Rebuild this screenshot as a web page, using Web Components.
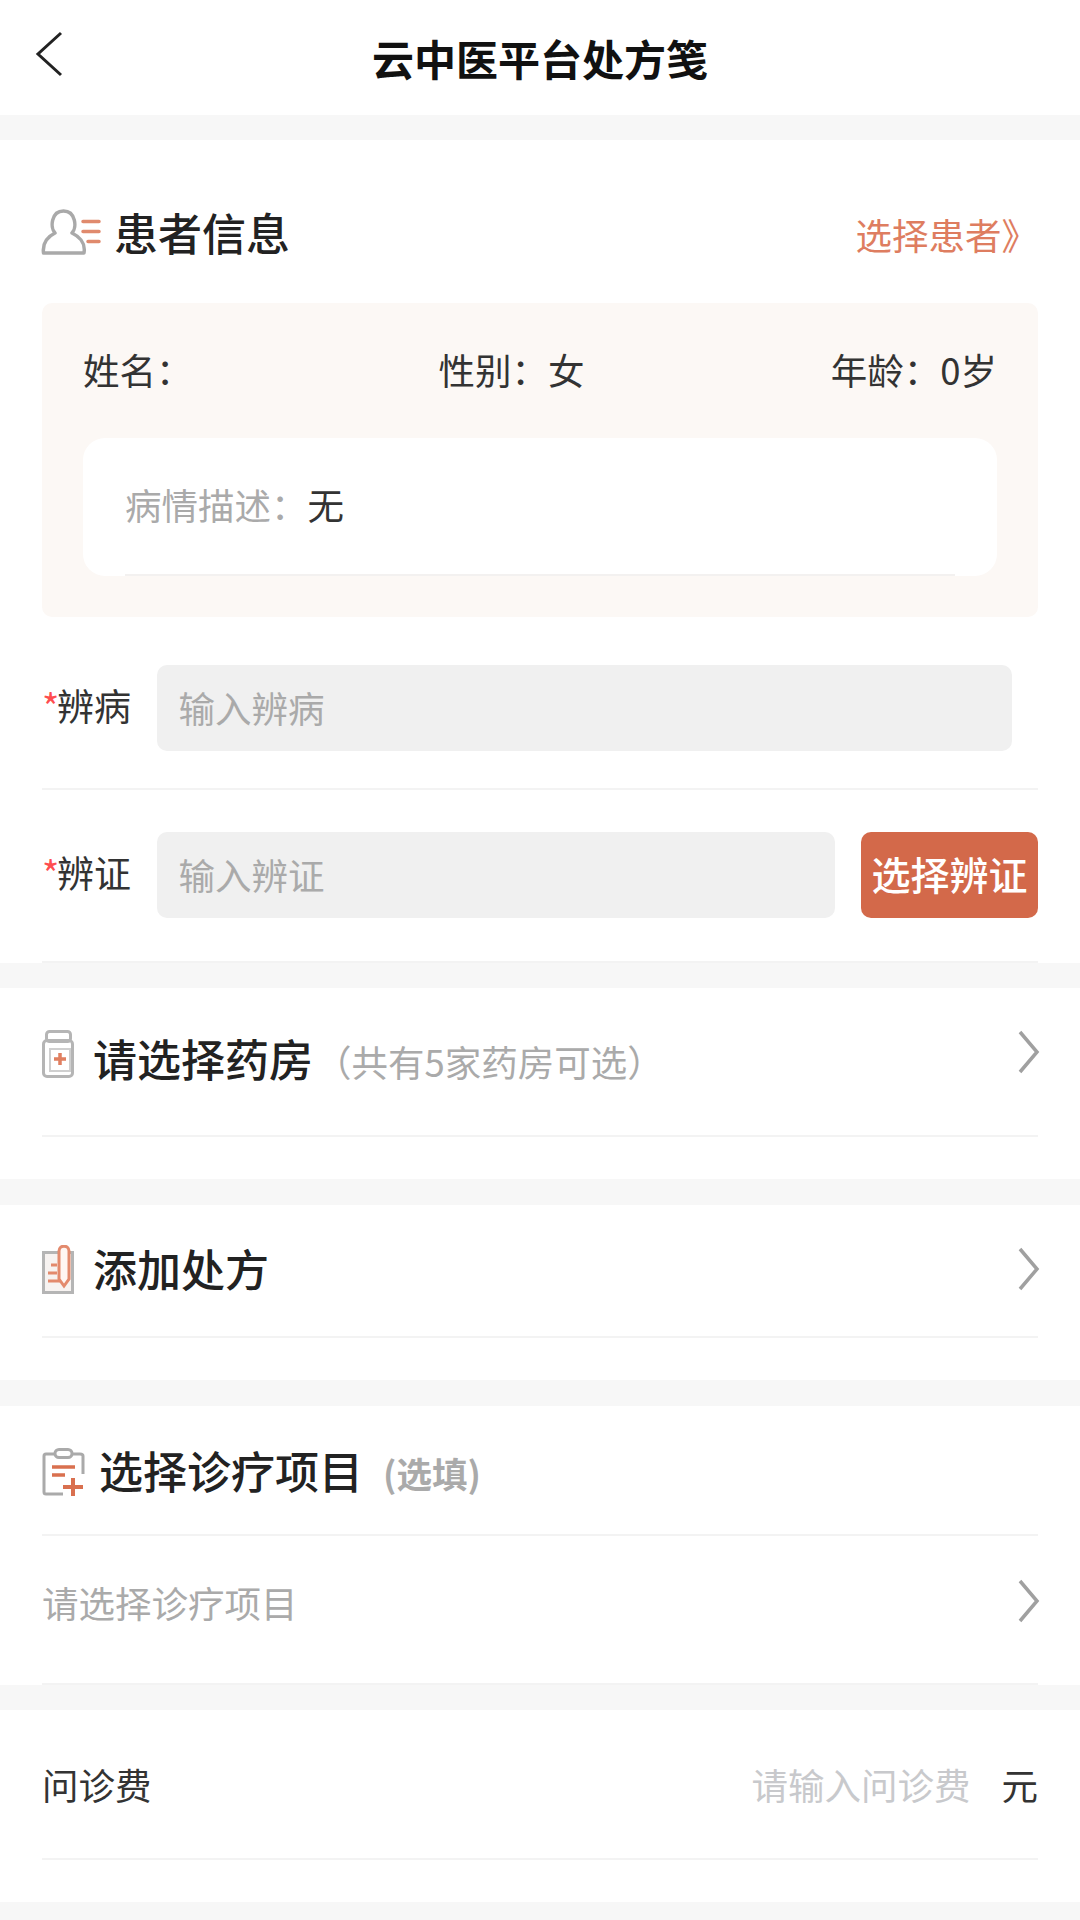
<!DOCTYPE html>
<html lang="zh">
<head>
<meta charset="utf-8">
<title>云中医平台处方笺</title>
<style>
html, body { margin: 0; background: #f7f7f7; }
body { width: 1080px; height: 1920px; overflow: hidden; font-family: "Noto Sans CJK SC", "Noto Sans", sans-serif; color: #333; }
</style>
</head>
<body>
<rx-header>云中医平台处方笺</rx-header>

<rx-section style="margin-top:25px">
  <rx-patient></rx-patient>
  <rx-field label="辨病" placeholder="输入辨病" style="padding:48px 26px 37px 0"></rx-field>
  <rx-field label="辨证" placeholder="输入辨证" action="选择辨证" style="padding:42px 0 43px"></rx-field>
</rx-section>

<rx-section style="margin-top:25px;height:191px">
  <rx-nav-row icon="bottle" note="（共有5家药房可选）" style="height:149px;--title-lift:7px;--icon-lift:15px;--go-lift:20px">请选择药房</rx-nav-row>
</rx-section>

<rx-section style="margin-top:26px;height:175px">
  <rx-nav-row icon="pen" style="height:133px;--title-lift:5px;--icon-lift:1px;--go-lift:3px">添加处方</rx-nav-row>
</rx-section>

<rx-section style="margin-top:26px">
  <rx-title-row icon="clip" note="(选填)">选择诊疗项目</rx-title-row>
  <rx-pick-row>请选择诊疗项目</rx-pick-row>
</rx-section>

<rx-section style="margin-top:25px;height:192px">
  <rx-fee-row placeholder="请输入问诊费" unit="元">问诊费</rx-fee-row>
</rx-section>

<script>
/** Icons, drawn at 1:1 on the page's pixel scale */
const RxIcons = {
    back: `<svg width="28" height="46" viewBox="0 0 28 46" fill="none" stroke="#222" stroke-width="3"><path d="M26 2 L3 23 L26 44"/></svg>`,
    chevron: `<svg width="23" height="46" viewBox="0 0 23 46" fill="none" stroke="#a0a0a0" stroke-width="3.500"><path d="M3 3 L20 23 L3 43"/></svg>`,
    person: `<svg width="60" height="48" viewBox="0 0 60 48" fill="none" stroke-linecap="round">
        <path d="M2.500 45 C1 33 8 28 14 25 C9 20 10 3 22.500 3 C35 3 36 20 31 25 C37 28 45 33 43 45 Z" stroke="#a9a9a9" stroke-width="3.500" stroke-linejoin="round"/>
        <path d="M42 13.500 H58 M42 23.500 H58 M47 33.500 H58" stroke="#e08a6d" stroke-width="3.500"/></svg>`,
    bottle: `<svg width="32" height="48" viewBox="0 0 32 48" fill="none">
        <rect x="4.500" y="1.500" width="24" height="10" rx="3" stroke="#b5b5b5" stroke-width="3"/>
        <rect x="1.500" y="10.500" width="29" height="36" rx="3.500" stroke="#b5b5b5" stroke-width="3"/>
        <rect x="8" y="19" width="20" height="22" stroke="#cfcfcf" stroke-width="2"/>
        <path d="M18 23 V35 M12 29 H24" stroke="#e07f60" stroke-width="3.500"/></svg>`,
    pen: `<svg width="32" height="50" viewBox="0 0 32 50" fill="none">
        <path d="M1.500 7.500 H30.500 V47.500 H1.500 Z" fill="#f7f3f1" stroke="#b5b5b5" stroke-width="3"/>
        <path d="M17 6 C17 -0.500 27 -0.500 27 6 V34 L22 41 L17 34 Z" fill="#fff6f2" stroke="#e38a6d" stroke-width="3"/>
        <path d="M9 20 H15 M6 28 H15 M6 36 H19" stroke="#e38a6d" stroke-width="3"/></svg>`,
    clip: `<svg width="46" height="50" viewBox="0 0 46 50" fill="none">
        <path d="M12 7 H4 Q2 7 2 9 V45 Q2 47 4 47 H21 M29 7 H38 Q41 7 41 9 V27" stroke="#aaa" stroke-width="3"/>
        <rect x="13" y="2.500" width="17" height="8" rx="4" stroke="#aaa" stroke-width="3"/>
        <path d="M10 20 H33 M10 28 H23" stroke="#d9704f" stroke-width="3.500"/>
        <path d="M31 31 V49 M21 40 H41" stroke="#d9704f" stroke-width="4"/></svg>`
};

customElements.define('rx-header', class extends HTMLElement {
    connectedCallback(){
        this.attachShadow({mode: 'open'}).innerHTML = `<style>
        :host { display: flex; align-items: center; justify-content: center; position: relative; height: 115px; background: #fff; }
        .back { position: absolute; left: 35px; top: 31px; line-height: 0; }
        h1 { margin: 0 0 0; font-size: 42px; font-weight: 700; color: #111; line-height: 115px; }
        </style>
        <span class="back">${RxIcons.back}</span><h1><slot></slot></h1>`;
    }
});

/** White band with the page's side padding */
customElements.define('rx-section', class extends HTMLElement {
    connectedCallback(){
        this.attachShadow({mode: 'open'}).innerHTML = `<style>
        :host { display: block; box-sizing: border-box; background: #fff; padding: 0 42px; }
        </style><slot></slot>`;
    }
});

customElements.define('rx-patient', class extends HTMLElement {
    connectedCallback(){
        this.attachShadow({mode: 'open'}).innerHTML = `<style>
        :host { display: block; }
        .head { display: flex; align-items: center; justify-content: space-between; box-sizing: border-box; height: 163px; padding-top: 21px; }
        .title { display: flex; align-items: center; gap: 13px; font-size: 44px; font-weight: 500; color: #222; }
        .title svg { display: block; margin-left: -1px; }
        .pick { font-size: 36.500px; color: #de7d60; margin-right: 0; margin-top: 4px; }
        .card { background: #fcf8f5; border-radius: 10px; padding: 0 41px 41px; }
        .info { display: flex; justify-content: space-between; align-items: center; height: 135px; font-size: 36.500px; color: #333; }
        .info span { margin-bottom: 3px; }
        .box { background: #fff; border-radius: 22px; padding: 0 42px; }
        .desc { box-sizing: border-box; height: 138px; display: flex; align-items: center; font-size: 36.500px; color: #aaa; border-bottom: 2px solid #f3f1f0; padding-bottom: 4px; }
        .desc b { font-weight: 400; color: #333; }
        </style>
        <div class="head">
            <div class="title">${RxIcons.person}<span>患者信息</span></div>
            <div class="pick">选择患者》</div>
        </div>
        <div class="card">
            <div class="info"><span>姓名：</span><span>性别：女</span><span>年龄：0岁</span></div>
            <div class="box"><div class="desc">病情描述：<b>无</b></div></div>
        </div>`;
    }
});

/** Label with a red star, grey input box and an optional button */
customElements.define('rx-field', class extends HTMLElement {
    connectedCallback(){
        const action = this.getAttribute('action');
        this.attachShadow({mode: 'open'}).innerHTML = `<style>
        :host { display: flex; align-items: center; box-sizing: border-box; border-bottom: 2px solid #f3f3f3; }
        .label { flex: 0 0 114.500px; font-size: 37px; color: #333; white-space: nowrap; margin-bottom: 6px; }
        .star { color: #ff4d4f; display: inline-block; width: 15px; }
        .input { flex: 1; height: 86px; box-sizing: border-box; display: flex; align-items: center; padding: 0 0 2px 22px; background: #f0f0f0; border-radius: 10px; font-size: 36.500px; color: #aaa; }
        .action { flex: 0 0 177px; height: 86px; margin-left: 26px; display: flex; align-items: center; justify-content: center; background: #d3694a; color: #fff; border-radius: 10px; font-size: 39px; font-weight: 500; white-space: nowrap; padding-bottom: 4px; box-sizing: border-box; }
        </style>
        <span class="label"><span class="star">*</span>${this.getAttribute('label')}</span>
        <div class="input">${this.getAttribute('placeholder')}</div>
        ${action ? `<div class="action">${action}</div>` : ''}`;
    }
});

customElements.define('rx-nav-row', class extends HTMLElement {
    connectedCallback(){
        const note = this.getAttribute('note');
        this.attachShadow({mode: 'open'}).innerHTML = `<style>
        :host { display: flex; align-items: center; box-sizing: border-box; border-bottom: 2px solid #f3f3f3; }
        .icon { line-height: 0; margin-right: 19px; margin-bottom: var(--icon-lift, 0); }
        .title { font-size: 44px; font-weight: 500; color: #222; margin-bottom: var(--title-lift, 0); }
        .note { font-size: 36.500px; color: #aaa; margin-left: 2px; }
        .go { margin-left: auto; margin-right: -2px; line-height: 0; margin-bottom: var(--go-lift, 0); }
        </style>
        <span class="icon">${RxIcons[this.getAttribute('icon')]}</span>
        <span class="title"><slot></slot></span>
        ${note ? `<span class="note">${note}</span>` : ''}
        <span class="go">${RxIcons.chevron}</span>`;
    }
});

customElements.define('rx-title-row', class extends HTMLElement {
    connectedCallback(){
        this.attachShadow({mode: 'open'}).innerHTML = `<style>
        :host { display: flex; align-items: center; box-sizing: border-box; height: 130px; border-bottom: 2px solid #f3f3f3; }
        .icon { line-height: 0; margin-right: 11px; margin-top: 3px; }
        .title { font-size: 44px; font-weight: 500; color: #222; }
        .note { font-size: 35.500px; font-weight: 700; color: #aaa; margin-left: 20px; margin-top: 5px; }
        </style>
        <span class="icon">${RxIcons[this.getAttribute('icon')]}</span>
        <span class="title"><slot></slot></span>
        <span class="note">${this.getAttribute('note')}</span>`;
    }
});

customElements.define('rx-pick-row', class extends HTMLElement {
    connectedCallback(){
        this.attachShadow({mode: 'open'}).innerHTML = `<style>
        :host { display: flex; align-items: center; justify-content: space-between; box-sizing: border-box; height: 149px; border-bottom: 2px solid #f3f3f3; font-size: 36.500px; color: #aaa; }
        .text { margin-bottom: 14px; }
        .go { margin-right: -2px; line-height: 0; margin-bottom: 18px; }
        </style>
        <span class="text"><slot></slot></span><span class="go">${RxIcons.chevron}</span>`;
    }
});

customElements.define('rx-fee-row', class extends HTMLElement {
    connectedCallback(){
        this.attachShadow({mode: 'open'}).innerHTML = `<style>
        :host { display: flex; align-items: center; box-sizing: border-box; height: 150px; border-bottom: 2px solid #f3f3f3; font-size: 36.500px; color: #333; }
        .ph { margin-left: auto; color: #c8c9cc; font-size: 36.500px; }
        .unit { margin-left: 31px; }
        </style>
        <slot></slot>
        <span class="ph">${this.getAttribute('placeholder')}</span>
        <span class="unit">${this.getAttribute('unit')}</span>`;
    }
});
</script>
</body>
</html>
